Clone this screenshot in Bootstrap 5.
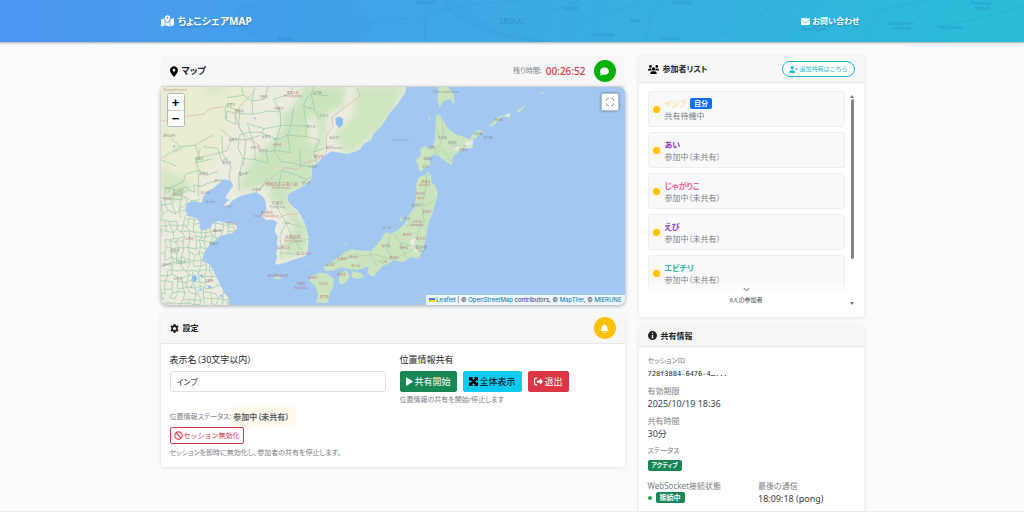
<!DOCTYPE html>
<html lang="ja">
<head>
<meta charset="utf-8">
<meta name="viewport" content="width=device-width, initial-scale=1">
<title>ちょこシェアMAP</title>
<link href="https://cdn.jsdelivr.net/npm/bootstrap@5.3.0/dist/css/bootstrap.min.css" rel="stylesheet">
<style>
  html { scrollbar-width: none; }
  body {
    font-family: "Noto Sans", "Noto Sans CJK JP", sans-serif;
    font-feature-settings: "palt";
    font-size: 9px; line-height: 14px; background: #fafbfd; color: #212529;
  }
  .page-box { max-width: 717px; padding-left: 7px; padding-right: 7px; }
  .page-row { --bs-gutter-x: 14px; }
  .page-main { padding-top: 14px; }
  svg.ico { width: 9px; height: 9px; fill: currentColor; flex: none; }
  /* header */
  .site-head { height: 42px; background: linear-gradient(100deg, #4d96f2, #2abdd7); box-shadow: 0 1px 2px rgba(0,0,0,.35); overflow: hidden; position: relative; }
  .head-map { position: absolute; inset: 0; width: 100%; height: 100%; }
  .head-map text { font-family: "Noto Sans", sans-serif; font-weight: 600; fill: #1560a8; fill-opacity: .3; }
  .site-head a { color: #fff; text-decoration: none; font-weight: 700; text-shadow: 0 1px 2px rgba(0,0,0,.3); }
  .site-title { font-size: 10px; }
  .contact { font-size: 8px; padding-right: 4px; gap: 2px; }
  /* cards */
  .panel { background: #fff; border-radius: 3px; box-shadow: 0 1px 4px rgba(0,0,0,.1); }
  .panel-head { background: #f7f7f7; border-bottom: 1px solid #e6e6e6; padding: 0 9px; border-radius: 3px 3px 0 0; }
  .panel-head h2 { font-size: 8px; line-height: 14px; font-weight: 600; margin: 0; }
  .panel-head h2.map-name { font-size: 9px; }
  .tall { height: 31px; }
  .round-btn { width: 22px; height: 22px; border: 0; border-radius: 50%; color: #fff; padding: 0; }
  .btn-chat { background: #06b106; }
  .btn-bell { background: #ffc107; }
  .t-muted { color: #7b8187; font-size: 8px; line-height: 12px; }
  .t-tiny { font-size: 7px; }
  .timer { color: #dc3545; font-size: 10px; font-weight: 500; }
  /* map */
  .map-box { position: relative; height: 218px; overflow: hidden; background: #a2c8f2; border-radius: 3px 6px 6px 6px; box-shadow: 0 1px 4px rgba(0,0,0,.35); }
  .map-box > svg { width: 100%; height: 100%; display: block; }
  .map-box svg text { font-family: "Noto Sans", "Noto Sans CJK JP", sans-serif; font-size: 9px; text-anchor: middle; fill-opacity: .7; }
  .zoom-ctl { position: absolute; left: 6px; top: 6px; border: 1px solid #b5b8b4; border-radius: 3px; background: #fff; }
  .zoom-ctl button { display: block; width: 16px; height: 16px; border: 0; background: #fff; padding: 0; font: 700 13px/15px "Liberation Sans", sans-serif; color: #000; border-radius: 2px; }
  .zoom-ctl button + button { border-top: 1px solid #ccc; border-radius: 0 0 2px 2px; }
  .full-ctl { position: absolute; right: 6px; top: 6px; width: 18px; height: 18px; border: 1px solid #b9c2cc; border-radius: 2px; background: #fff; padding: 0; color: #666; box-shadow: 0 0 3px rgba(0,0,0,.4); }
  .attrib { position: absolute; right: 0; bottom: 0; height: 10px; padding: 0 3px; background: rgba(255,255,255,.8); font: 6px/10px Inter, "Liberation Sans", sans-serif; font-feature-settings: normal; color: #333; white-space: nowrap; }
  .attrib a { color: #0078a8; text-decoration: none; }
  .attrib svg { width: 6px; height: 4px; }
  /* settings */
  .settings-body { padding: 9px 9px 8px; }
  .btn-line { gap: 6px; margin-bottom: 2px; }
  .btn-s { display: inline-flex; align-items: center; gap: 2px; font-size: 9px; line-height: 14px; padding: 2px 5px; height: 21px; border-radius: 2px; }
  svg.ico.slim { width: 7px; }
  .btn-out { height: 17px; font-size: 7px; padding: 0 3px; gap: 1px; color: #dc3545; border-color: #dc3545; }
  .status-line { margin-top: 1px; }
  .out-help { margin-top: 3px; }
  .name-in { height: 21px; font-size: 8px; line-height: 14px; padding: 2px 6px; border-radius: 3px; font-feature-settings: "palt"; }
  .stat-note { background: #fffaec; color: #5d6369; padding: 4px 7px 4px 2px; }
  /* participants */
  .list-head { height: 27px; }
  .list-body { padding: 8px 8px 12px 9px; }
  .btn-add { border: 1px solid #14bcd6; border-radius: 9px; color: #14bcd6; background: #fff; height: 16px; font-size: 6px; line-height: 10px; padding: 0 6px; display: inline-flex; align-items: center; gap: 1px; }
  .people { position: relative; height: 214px; overflow: hidden; }
  .person { height: 36px; background: #f8f9fa; border: 1px solid #eceef0; border-radius: 3px; margin-bottom: 5px; padding-left: 4px; gap: 5px; }
  .dot { width: 7px; height: 7px; border-radius: 50%; background: #ffc107; box-shadow: 0 0 0 4px #fcf6e8; flex: none; }
  .person b { font-size: 8px; line-height: 13px; font-weight: 600; }
  .tag { font-size: 6px; line-height: 11px; padding: 0 4px; border-radius: 2px; font-weight: 700; color: #fff; display: inline-block; }
  .tag-lg { font-size: 7px; }
  .fade-more { position: absolute; left: 0; right: 0; bottom: 0; height: 24px; padding-top: 6px; background: linear-gradient(rgba(255,255,255,0), rgba(255,255,255,.93) 50%, #fff); font-size: 6px; line-height: 8px; color: #444; }
  .scroll-rail { width: 7px; }
  .scroll-rail i { display: block; border-left: 2px solid transparent; border-right: 2px solid transparent; }
  .rail-up { border-bottom: 3px solid #777; }
  .rail-down { border-top: 3px solid #777; }
  .rail-thumb { width: 3px; height: 160px; border-radius: 2px; background: #868686; margin-top: 1px; }
  /* info */
  .info-head { height: 22px; }
  .info-body { padding: 8px 9px; }
  .info-body dt { font-weight: 400; color: #7b8187; font-size: 8px; line-height: 12px; }
  .info-body dt.t-tiny { font-size: 7px; }
  .info-body dd { margin: 0 0 5px; line-height: 13px; color: #3d4247; }
  .info-body dd.id-row { line-height: 12px; }
  .info-body code { font: 7px/12px "DejaVu Sans Mono", monospace; color: #212529; }
  .live { width: 4px; height: 4px; border-radius: 50%; background: #28a745; }
  .foot-line { height: 1px; background: #e9ebed; }
</style>
</head>
<body>
<header class="site-head d-flex align-items-center">
  <svg class="head-map" viewBox="0 0 1024 42" preserveAspectRatio="xMidYMid slice">
    <g fill="none" stroke="#2176b4" stroke-opacity=".12" stroke-width="1">
      <path d="M345 42L365 25L380 20L420 18L440 10L475 4L520 0M425 42L424 20L430 8M445 8L470 26L500 36L545 42M455 0L480 18L495 32M505 42L530 20L560 8L580 0M560 42L585 20L605 14L640 4M645 42L650 20L660 0M700 38L740 30L780 0M860 42L880 10L930 0M930 28L980 18L1024 6"/>
    </g>
    <g fill="#2378ca" fill-opacity=".06"><path d="M240 4l40-4h80l-4 12 20 10-15 20h-100l-30-20z"/><path d="M455 0q18 20 50 32l50 10h-12l-48-8Q460 24 440 0z"/></g>
    <text x="499" y="24" font-size="8">SEOUL</text><text x="563" y="10" font-size="6">GURI</text>
    <text x="592" y="37" font-size="6">HANAM</text><text x="630" y="22" font-size="5">Joan</text>
    <text x="660" y="40" font-size="5">Yangseo</text><text x="672" y="4" font-size="5">Seojong</text>
    <text x="416" y="4" font-size="5">Gochon</text><text x="278" y="41" font-size="5">Bukdo</text>
    <text x="801" y="31" font-size="5">Cheongun</text><text x="888" y="25" font-size="5">Gonggeun-</text>
    <text x="894" y="30" font-size="5">myeon</text><text x="938" y="29" font-size="5">Gapcheon</text>
    <text x="970" y="5" font-size="5">Cheongil-</text><text x="974" y="10" font-size="5">myeon</text>
  </svg>
  <div class="container-fluid page-box d-flex justify-content-between align-items-center position-relative">
    <a href="#" class="site-title d-flex align-items-center gap-1">
      <svg viewBox="0 0 576 512" fill="#fff" width="13" height="12"><path d="M408 120c0 54.600-73.100 151.900-105.200 192c-7.700 9.600-22 9.600-29.600 0C241.100 271.900 168 174.600 168 120C168 53.700 221.700 0 288 0s120 53.700 120 120zm8 80.400c3.500-6.900 6.700-13.800 9.600-20.600c.5-1.200 1-2.500 1.500-3.700l116-46.400C558.900 123.400 576 135 576 152V422.800c0 9.800-6 18.600-15.100 22.300L416 503V200.400zM137.600 138.300c2.400 14.100 7.200 28.300 12.800 41.500c2.900 6.800 6.100 13.700 9.600 20.600V451.800L32.900 502.700C17.100 509 0 497.400 0 480.400V209.600c0-9.800 6-18.600 15.100-22.300l122.500-49zM327.800 332c13.900-17.400 35.700-45.700 56.200-77V504.300L192 449.400V255c20.500 31.300 42.300 59.600 56.200 77c20.500 25.600 59.100 25.600 79.600 0zM288 152a40 40 0 1 0 0-80 40 40 0 1 0 0 80z"/></svg>
      <span>ちょこシェアMAP</span></a>
    <a href="#" class="contact d-flex align-items-center">
      <svg class="ico" viewBox="0 0 512 512"><path d="M48 64C21.500 64 0 85.500 0 112c0 15 7 29 19 38L237 314c11 9 27 9 38 0L493 150c12-9 19-23 19-38 0-26-21-48-48-48H48zM0 176V384c0 35 29 64 64 64H448c35 0 64-29 64-64V176L294 339c-23 18-53 18-76 0L0 176z"/></svg>
      <span>お問い合わせ</span></a>
  </div>
</header>

<main class="container-fluid page-box page-main">
  <div class="row page-row">
    <div class="col-8">
      <section class="mb-2">
        <div class="panel-head tall d-flex align-items-center justify-content-between">
          <h2 class="map-name d-flex align-items-center gap-1"><svg viewBox="0 0 384 512" width="8" height="11"><path d="M216 499C267 435 384 279 384 192 384 86 298 0 192 0S0 86 0 192C0 279 117 435 168 499c12 15 36 15 48 0zM192 128a64 64 0 1 1 0 128 64 64 0 1 1 0-128z"/></svg>マップ</h2>
          <div class="d-flex align-items-center"><span class="t-muted t-tiny me-1">残り時間:</span><span class="timer me-2">00:26:52</span>
            <button class="round-btn btn-chat d-flex align-items-center justify-content-center" aria-label="チャット"><svg class="ico" viewBox="0 0 512 512"><path d="M512 240c0 115-115 208-256 208-37 0-72-6-104-18-28 20-72 43-125 50-20 3-30-14-19-28 18-22 36-51 40-82C18 334 0 289 0 240 0 125 115 32 256 32s256 93 256 208z"/></svg></button></div>
        </div>
        <div class="map-box">
          <svg viewBox="3 3 1392 654" preserveAspectRatio="xMidYMid slice">
            <defs>
              <path id="mainland" d="M0 0H740L735 20L712 55L690 80L668 115L640 145L632 163L612 172L600 190L582 198L560 204L540 200L515 196L490 210L478 225L462 240L455 252L454 278L442 292L425 303L400 316L384 326L384 345L398 362L412 372L430 402L440 430L445 452L444 485L440 508L418 515L398 522L375 530L350 536L345 530L352 515L348 500L355 487L350 470L354 452L344 437L346 424L352 410L340 402L318 402L305 390L320 370L315 340L306 330L288 318L262 325L240 330L216 345L204 360L188 362L200 348L208 342L195 335L206 318L220 300L213 286L195 280L178 292L160 306L140 318L128 335L125 350L104 345L84 350L75 368L84 390L108 396L120 410L118 426L128 434L150 426L158 412L175 405L200 412L225 410L232 428L218 440L180 450L165 464L146 480L132 500L126 525L148 535L158 548L172 580L185 605L196 625L210 640L205 660H0Z"/>
              <path id="isles" d="M835 0H862L878 20L884 45L880 55L872 38L850 45L838 66L832 40ZM828 90L836 84L848 100L862 125L885 144L910 152L928 160L937 150L940 165L936 186L915 188L895 198L878 212L876 238L855 226L830 205L818 206L806 218L812 235L798 245L780 258L774 240L768 222L782 210L782 188L794 180L806 188L820 178L825 160ZM808 270L788 268L775 276L768 300L770 322L765 348L757 375L744 390L735 412L722 425L708 435L690 445L678 438L668 452L650 478L632 495L604 494L575 490L556 498L535 515L510 530L490 546L498 556L522 553L545 544L565 550L592 552L615 545L626 540L622 562L640 572L655 555L668 540L690 530L705 522L722 528L738 525L752 512L764 516L776 518L784 500L792 490L795 468L800 440L806 410L816 385L828 345L834 325L828 304L815 288L812 262Z"/>
              <clipPath id="mc"><use href="#mainland"/></clipPath>
              <clipPath id="ic"><use href="#isles"/></clipPath>
              <filter id="soft"><feGaussianBlur stdDeviation="10"/></filter>
            </defs>
            <use href="#mainland" fill="#ecebdf"/>
            <g clip-path="url(#mc)">
              <g filter="url(#soft)">
                <path fill="#e8edd0" d="M0 0H290L250 60L200 110L180 200L110 290L0 260Z"/>
                <path fill="#cbe4bd" d="M430 0H560L550 60L500 80L490 180L440 220L340 290L230 320L270 230L330 170L350 100L400 60Z"/>
                <path fill="#cfe6c0" d="M590 0H740L660 140L560 210L520 150L580 90Z"/>
                <path fill="#cbe4bd" d="M330 270L470 200L450 290L380 330L400 370L440 420L440 500L360 520L400 420L370 360L330 340Z"/>
                <path fill="#d3e5c1" d="M120 10L180 0L210 10L160 25ZM0 250L60 270L100 300L40 350L0 310Z"/>
                <path fill="#ecebdf" d="M440 100L470 90L480 160L450 180ZM340 90L360 80L370 130L330 170Z"/>
              </g>
              <g id="roads" fill="none" stroke="#93c8a1" stroke-width="2"></g>
              <g fill="none" stroke="#d8b0ae" stroke-width="2">
                <path d="M288 318L320 290L350 262L375 245L410 250L440 228L470 222L500 195L498 150L520 120L515 95L560 60L600 30L590 0M355 395L380 385L412 384M0 100L30 110L80 90L130 85L150 68L190 62M280 20L250 50L225 80L240 130L270 160L300 180"/>
              </g>
              <path fill="#8dbff0" d="M526 96L540 92L550 100L548 118L538 126L528 115ZM280 92l8 4-3 6zM340 158l10-3-4 10zM38 180l8-3-3 8zM95 572l10-6 8 12-12 12zM118 570l8-6 4 14zM140 596l18 8-10 4zM60 528l6 2-4 8zM98 590l-6 14 4 2zM120 606l8 4-6 6zM178 630l8-4 3 10z"/>
            </g>
            <use href="#isles" fill="#cbe4bd"/>
            <g fill="#cbe4bd">
              <path d="M478 560L500 562L522 580L520 600L508 625L505 650H468L474 625L466 600L446 584L455 570ZM540 562L558 552L570 570L556 592L540 596L536 580ZM575 555L600 560L612 572L590 580L575 572ZM942 160L932 150L946 136L960 132L972 138L955 148ZM985 122L1010 95L1035 84L1020 100L1000 118ZM1040 90L1052 80L1046 96ZM1068 78L1098 54L1090 66L1075 80ZM1138 26L1156 12L1148 24ZM718 398L728 390L724 400L730 406L720 405ZM798 262L806 258L808 268L798 268ZM344 570L368 572L360 580L342 578ZM436 545L444 530L440 544ZM756 228l4 4-4 3zM804 88l8 10-4 4zM552 474l6-4 2 6zM486 416l6 2-5 3z"/>
            </g>
            <g fill="#ecebdf"><path d="M880 190l12-12 20 0-14 16zM915 168l24-4-2 20-16 4zM1030 92l18-12 2 10zM750 462l20-4-4 28 14 8-12 8-16-20z"/></g>
            <g clip-path="url(#ic)"><path fill="none" stroke="#9fcdaa" stroke-width="2" d="M845 90L850 150L880 180L935 180M820 200L845 170L830 130M875 230L850 190L820 205M800 270L798 310L785 350L790 400L775 440L760 490L700 520L640 505L560 515L500 540M765 350L800 360L825 340M740 420L780 415L800 400M700 440L720 470L760 480M690 450L680 490L700 520M720 470L740 520M630 500L650 540"/></g>
            <g clip-path="url(#mc)" fill="none" stroke="#9fcdaa" stroke-width="2"><path d="M378 410L395 450L430 500M378 410L420 420L440 430M378 410L360 450L365 520M365 480L400 470L445 460M345 355L378 410M360 500L420 505"/></g>
            <g fill="#c0526a">
              <text x="365" y="300" style="font-size:12px">朝鮮民主主義人民</text><text x="363" y="310">North Korea</text>
              <text x="398" y="458" style="font-size:12px">大韓民国</text><text x="399" y="467">South Korea</text>
              <text x="398" y="23">黒龍江省</text><text x="398" y="32">Heilongjiang</text><text x="352" y="180">吉林省</text><text x="476" y="217">羅先市</text>
              <text x="320" y="384">黄海南道</text><text x="318" y="394">South Hwanghae</text><text x="88" y="462">山東省</text><text x="22" y="341">河北省</text><text x="148" y="588">江蘇省</text><text x="46" y="14">Mongol Province</text>
              <text x="354" y="574">済州特別自治道</text><text x="424" y="598">長崎県</text><text x="422" y="608">Nagasaki</text><text x="372" y="488">全羅北道</text><text x="432" y="507">釜山広域市</text>
              <text x="510" y="540">山口県</text><text x="547" y="523">広島県</text><text x="580" y="517">岡山県</text><text x="587" y="543">香川県</text><text x="545" y="571">愛媛県</text><text x="490" y="598">大分県</text><text x="493" y="636">鹿児島</text><text x="460" y="580">福岡県</text>
              <text x="680" y="430">石川県</text><text x="678" y="482">福井県</text><text x="668" y="532">三重県</text><text x="797" y="290">青森県</text><text x="794" y="300">Aomori</text><text x="783" y="328">秋田県</text><text x="783" y="338">Akita</text><text x="801" y="380">宮城県</text><text x="770" y="411">山形県</text><text x="772" y="421">Yamagata</text><text x="742" y="451">新潟県</text><text x="731" y="489">長野県</text><text x="782" y="463">栃木県</text><text x="702" y="518">愛知県</text>
            </g>
            <g fill="#716e72">
              <text x="54" y="321" style="font-size:12px">北京市</text><text x="54" y="330">Beijing</text><text x="352" y="357" style="font-size:12px">平壌市</text><text x="352" y="366">Pyongyang</text><text x="378" y="415">ソウル</text><text x="783" y="488" style="font-size:12px">東京都</text><text x="783" y="498">Tokyo</text>
              <text x="212" y="60">通遼市</text><text x="238" y="79">開魯県</text><text x="310" y="35">大慶市</text><text x="472" y="24">佳木斯</text><text x="356" y="73">哈爾浜</text><text x="492" y="94">牡丹江</text><text x="522" y="160">延吉市</text><text x="522" y="189">Vladivostok</text><text x="453" y="127">敦化市</text><text x="27" y="152">錫林浩特</text><text x="219" y="165">阜新市</text><text x="117" y="222">赤峰市</text><text x="200" y="234">朝陽市</text><text x="131" y="268">承徳市</text><text x="177" y="287">錦州市</text><text x="318" y="155">長春市</text><text x="286" y="188">四平市</text><text x="250" y="267">鞍山市</text><text x="310" y="198">遼源市</text><text x="289" y="315">丹東市</text><text x="201" y="365">大連市</text><text x="216" y="418">威海市</text><text x="172" y="438">煙台市</text><text x="161" y="477">青島市</text><text x="136" y="323">唐山市</text><text x="44" y="498">済南市</text><text x="22" y="540">鄭州市</text><text x="65" y="530">徐州市</text><text x="53" y="582">合肥市</text><text x="439" y="293">元山市</text><text x="458" y="246">清津市</text>
              <text x="150" y="352">Bo Hai</text><text x="858" y="20">Yuzhno-Sakhalinsk</text><text x="847" y="160">札幌市</text><text x="877" y="173">北海道</text><text x="804" y="221">函館市</text><text x="910" y="194">釧路市</text><text x="796" y="245">松前</text><text x="816" y="190">室蘭</text><text x="1015" y="105">択捉島</text><text x="955" y="147">国後島</text><text x="984" y="160">色丹島</text><text x="742" y="402">佐渡</text><text x="768" y="362">酒田市</text><text x="722" y="165" fill="#6d9ac9">Sea of Japan</text>
            </g>
          </svg>
          <div class="zoom-ctl"><button aria-label="拡大">+</button><button aria-label="縮小">−</button></div>
          <button class="full-ctl d-flex align-items-center justify-content-center" aria-label="全画面"><svg viewBox="0 0 8 8" width="8" height="8" fill="none" stroke="#666"><path d="M.5 2.500V1.500L1.500.5H2.500M5.500.5H6.500L7.500 1.500V2.500M7.500 5.500V6.500L6.500 7.500H5.500M2.500 7.500H1.500L.5 6.500V5.500"/></svg></button>
          <div class="attrib"><svg viewBox="0 0 6 4"><path fill="#4c7be1" d="M0 0h6v2H0z"/><path fill="#ffd500" d="M0 2h6v2H0z"/></svg> <a href="#">Leaflet</a> | © <a href="#">OpenStreetMap</a> contributors, © <a href="#">MapTiler</a>, © <a href="#">MIERUNE</a></div>
        </div>
      </section>

      <section class="panel">
        <div class="panel-head tall d-flex align-items-center justify-content-between">
          <h2 class="d-flex align-items-center gap-1"><svg class="ico" viewBox="0 0 16 16"><path fill-rule="evenodd" d="M6.500 0h3l.5 2.200 1.500.9L13.700 2.400l1.500 2.700-1.600 1.600v2.600l1.600 1.600-1.500 2.700-2.200-.7-1.500.9-.5 2.200h-3L6 13.800l-1.500-.9-2.200.7L.8 10.900l1.600-1.600V6.700L.8 5.100l1.500-2.700 2.200.7L6 2.200zM8 5.300a2.700 2.700 0 1 0 0 5.400 2.700 2.700 0 0 0 0-5.400z"/></svg>設定</h2>
          <button class="round-btn btn-bell d-flex align-items-center justify-content-center" aria-label="通知"><svg class="ico" viewBox="0 0 448 512"><path d="M224 0c-18 0-32 14-32 32v19C119 66 64 130 64 208v19c0 47-17 92-48 127l-8 9c-8 9-10 22-5 33s16 19 29 19H416c13 0 24-8 29-19s3-24-5-33l-8-9c-31-35-48-80-48-127v-19c0-78-55-142-128-157V32c0-18-14-32-32-32zm45 493c12-12 19-28 19-45H160c0 17 7 33 19 45s28 19 45 19 33-7 45-19z"/></svg></button>
        </div>
        <div class="settings-body">
          <div class="row page-row">
            <div class="col-6"><label for="nm" class="mb-1 d-block">表示名（30文字以内）</label>
              <input id="nm" class="form-control name-in" value="インブ"></div>
            <div class="col-6"><div class="mb-1">位置情報共有</div>
              <div class="d-flex btn-line">
                <button class="btn btn-success btn-s"><svg class="ico slim" viewBox="0 0 13 16"><path d="M0 2q0-2 2-1l10 6q1.500 1 0 2L2 15.500q-2 1-2-1z"/></svg>共有開始</button>
                <button class="btn btn-info btn-s"><svg class="ico" viewBox="0 0 16 16"><path d="M1 0h5l1 1-1.500 1.500L8 5l2.500-2.500L9 1l1-1h5l1 1v5l-1 1-1.500-1.500L11 8l2.500 2.500L15 9l1 1v5l-1 1h-5l-1-1 1.500-1.500L8 11l-2.500 2.500L7 15l-1 1H1l-1-1v-5l1-1 1.500 1.500L5 8 2.500 5.500 1 7 0 6V1z"/></svg>全体表示</button>
                <button class="btn btn-danger btn-s"><svg class="ico" viewBox="0 0 512 512"><path d="M160 32c18 0 32 14 32 32s-14 32-32 32H96c-18 0-32 14-32 32v256c0 18 14 32 32 32h64c18 0 32 14 32 32s-14 32-32 32H96c-53 0-96-43-96-96V128c0-53 43-96 96-96zM504 238L378 105c-16-16-42-5-42 18v69H192c-18 0-32 14-32 32v64c0 18 14 32 32 32h144v69c0 23 26 34 42 18l126-133c10-10 10-26 0-36z"/></svg>退出</button>
              </div>
              <div class="t-muted t-tiny">位置情報の共有を開始/停止します</div></div>
          </div>
          <div class="t-muted status-line d-flex align-items-center"><span class="t-tiny">位置情報ステータス:</span><strong class="stat-note fw-bold">参加中（未共有）</strong></div>
          <button class="btn btn-s btn-out"><svg class="ico" viewBox="0 0 16 16"><g fill="none" stroke="currentColor" stroke-width="2"><circle cx="8" cy="8" r="6.500"/><path d="M3.500 3.500l9 9"/></g></svg>セッション無効化</button>
          <div class="t-muted t-tiny out-help">セッションを即時に無効化し、参加者の共有を停止します。</div>
        </div>
      </section>
    </div>

    <div class="col-4">
      <section class="panel mb-2">
        <div class="panel-head list-head d-flex align-items-center justify-content-between">
          <h2 class="d-flex align-items-center gap-1"><svg viewBox="0 0 640 512" width="11" height="9"><path d="M144 0a80 80 0 1 1 0 160 80 80 0 1 1 0-160zM512 0a80 80 0 1 1 0 160 80 80 0 1 1 0-160zM0 299c0-59 48-107 107-107h42c16 0 31 4 45 10-10 55 8 92 41 118H21c-12 0-21-10-21-21zM405 320c37-30 48-75 41-118 14-7 29-10 45-10h42c59 0 107 48 107 107 0 12-10 21-21 21zM224 224a96 96 0 1 1 192 0 96 96 0 1 1-192 0zM128 485c0-73 60-133 133-133h118c73 0 133 60 133 133 0 15-12 27-27 27H155c-15 0-27-12-27-27z"/></svg>参加者リスト</h2>
          <button class="btn-add"><svg viewBox="0 0 640 512" width="9" height="7" fill="currentColor"><path d="M96 128a128 128 0 1 1 256 0 128 128 0 1 1-256 0zM0 482c0-98 80-178 178-178h92c98 0 178 80 178 178 0 17-13 30-30 30H30c-17 0-30-13-30-30zM504 312v-64h-64v-48h64v-64h48v64h64v48h-64v64z"/></svg>追加共有はこちら</button>
        </div>
        <div class="list-body d-flex">
          <div class="people flex-grow-1 me-1" id="people">
            <div class="fade-more text-center"><svg viewBox="0 0 8 5" width="7" height="5" class="d-block mx-auto mb-1" fill="none" stroke="#444"><path d="M1 1l3 3 3-3"/></svg>6人の参加者</div>
          </div>
          <div class="scroll-rail d-flex flex-column align-items-center pt-1"><i class="rail-up"></i><div class="rail-thumb"></div><i class="rail-down mt-auto"></i></div>
        </div>
      </section>

      <section class="panel">
        <div class="panel-head info-head d-flex align-items-center">
          <h2 class="d-flex align-items-center gap-1"><svg class="ico" viewBox="0 0 16 16"><path fill-rule="evenodd" d="M8 0a8 8 0 1 0 0 16A8 8 0 0 0 8 0zM7 3h2v2.500H7zM6.500 7H9v4.500h1V13H6v-1.500h1v-3h-.5z"/></svg>共有情報</h2>
        </div>
        <dl class="info-body mb-0">
          <dt class="t-tiny">セッションID</dt><dd class="id-row"><code>728f3884-6476-4…...</code></dd>
          <dt>有効期限</dt><dd>2025/10/19 18:36</dd>
          <dt>共有時間</dt><dd>30分</dd>
          <dt class="t-tiny">ステータス</dt><dd><span class="tag bg-success">アクティブ</span></dd>
          <div class="row page-row pt-1">
            <div class="col-6"><dt>WebSocket接続状態</dt><dd class="d-flex align-items-center gap-1"><span class="live"></span><span class="tag tag-lg bg-success">接続中</span></dd></div>
            <div class="col-6"><dt>最後の通信</dt><dd>18:09:18 (pong)</dd></div>
          </div>
        </dl>
      </section>
    </div>
  </div>
</main>
<div class="foot-line fixed-bottom"></div>

<script src="https://cdn.jsdelivr.net/npm/bootstrap@5.3.0/dist/js/bootstrap.bundle.min.js"></script>
<script>
  // participant rows
  const people = [["インブ", "#ffe1a1", true], ["あい", "#9636c4"], ["じゃがりこ", "#f2639c"], ["えび", "#8a3fd6"], ["エビチリ", "#2eb5a5"], ["たろう", "#888888"]];
  document.getElementById("people").insertAdjacentHTML("afterbegin", people.map(p =>
    `<div class="person d-flex align-items-center"><span class="dot"></span><div><div class="d-flex align-items-center gap-1"><b style="color:${p[1]}">${p[0]}</b>${p[2] ? '<span class="tag tag-lg bg-primary">自分</span>' : ""}</div><div class="t-muted">${p[2] ? "共有待機中" : "参加中（未共有）"}</div></div></div>`).join(""));

  // road network: a jittered grid, denser on the southern plain
  let seed = 7;
  const rnd = () => (seed = (seed * 16807) % 2147483647) / 2147483647;
  let d = "";
  function mesh(x0, y0, x1, y1, step, keep) {
    const pts = {};
    const at = (i, j) => pts[i + "," + j] ??= [Math.round(x0 + i * step + (rnd() - .5) * step * .8), Math.round(y0 + j * step + (rnd() - .5) * step * .8)];
    for (let i = 0; x0 + i * step < x1; i++) for (let j = 0; y0 + j * step < y1; j++) {
      if (rnd() < keep) d += `M${at(i, j)}L${at(i + 1, j)}`;
      if (rnd() < keep) d += `M${at(i, j)}L${at(i, j + 1)}`;
    }
  }
  mesh(0, 400, 230, 660, 17, .85);
  mesh(0, 300, 120, 400, 20, .8);
  mesh(200, 0, 480, 300, 38, .62);
  mesh(0, 190, 200, 310, 36, .5);
  d += "M0 220L60 182L105 178L130 162L160 148M105 178L118 210L110 230M60 182L28 152M180 128L216 158L258 162L300 148M216 158L200 195L118 215M196 100L196 60L240 75L236 120L258 162L250 240";
  document.getElementById("roads").innerHTML = `<path d="${d}"/>`;
</script>
</body>
</html>
